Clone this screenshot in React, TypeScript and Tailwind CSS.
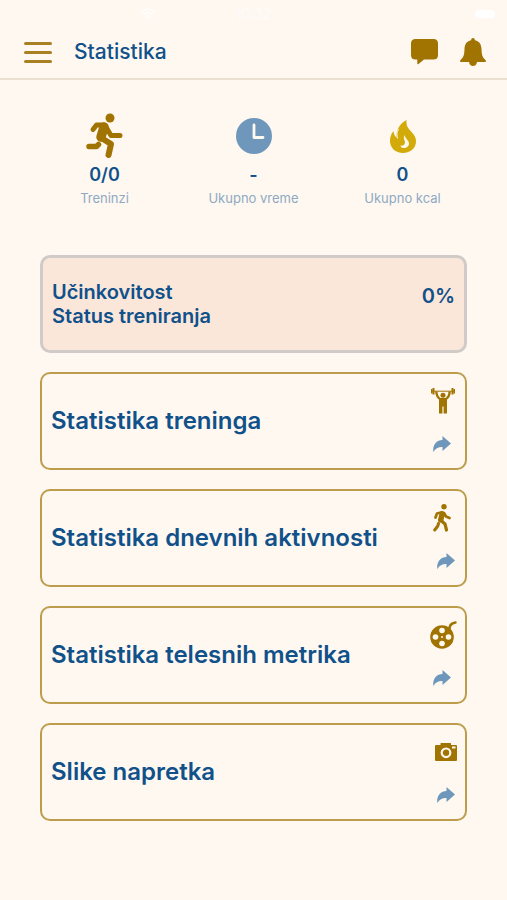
import React from 'react';
import { Wifi } from 'lucide-react';

type IconProps = { className?: string };

const RunnerIcon = ({ className }: IconProps) => (
    <svg viewBox="0 0 38 46" className={className} fill="none" stroke="currentColor" strokeLinecap="round" strokeLinejoin="round" aria-hidden="true">
        <circle cx="24" cy="5" r="4.5" fill="currentColor" stroke="none" />
        <path d="M7 16.500L10.500 12L18 12" strokeWidth="5" />
        <path d="M20 14L25 22.500L34 22.500" strokeWidth="5" />
        <path d="M18 14L15 24" strokeWidth="9.500" />
        <path d="M15.500 25L25 31L22.500 42" strokeWidth="6" />
        <path d="M3 33.500L10.500 33.500L12.500 31.500" strokeWidth="5.500" />
    </svg>
);

const ClockIcon = ({ className }: IconProps) => (
    <svg viewBox="0 0 36 36" className={className} aria-hidden="true">
        <circle cx="18" cy="18" r="18" fill="currentColor" />
        <path d="M18 7V19.500H27" fill="none" stroke="#fef8f1" strokeWidth="2.800" strokeLinecap="round" strokeLinejoin="round" />
    </svg>
);

const FlameIcon = ({ className }: IconProps) => (
    <svg viewBox="0 0 26 33" className={className} aria-hidden="true">
        <path d="M16.500 0C16 6 18 8 21.500 12C24.500 15.400 26 17.500 26 21.500C26 28 20.500 33 13 33C5.500 33 0 28 0 21C0 17 1 14 3.500 11C3.800 14 4.500 16 6.500 17.500C6 10 9.500 4 16.500 0Z" fill="currentColor" />
        <path d="M15 15C14.500 18.500 19 20 19 23.500C19 26 17 28 13.500 28C11.500 28 10.500 26.500 10.500 25.500C13 26 15 25 15 22.500C15 20 12.500 18 15 15Z" fill="#fef8f1" />
        <path d="M8.500 9C6.500 12 6.800 15.500 7.500 18.500" fill="none" stroke="#fef8f1" strokeWidth="1" />
    </svg>
);

const ChatIcon = ({ className }: IconProps) => (
    <svg viewBox="0 0 27 26" className={className} fill="currentColor" aria-hidden="true">
        <path d="M4.500 0H22.500Q27 0 27 4.500V16Q27 20.500 22.500 20.500H13L7.500 25Q6.300 25.600 6.300 24.200V20.500H4.500Q0 20.500 0 16V4.500Q0 0 4.500 0Z" />
    </svg>
);

const BellIcon = ({ className }: IconProps) => (
    <svg viewBox="0 0 26 29" className={className} fill="currentColor" aria-hidden="true">
        <path d="M13 0Q14.800 0 15 2.200C19.500 3.200 21.300 6.500 21.500 11C21.700 17 22.500 19.500 25.500 22Q26.700 24 24.500 24H1.500Q-.7 24 .5 22C3.500 19.500 4.300 17 4.500 11C4.700 6.500 6.500 3.200 11 2.200Q11.200 0 13 0Z" />
        <path d="M9 24H17Q16.300 28 13 28Q9.700 28 9 24Z" />
    </svg>
);

const LifterIcon = ({ className }: IconProps) => (
    <svg viewBox="0 0 24 26" className={className} fill="currentColor" aria-hidden="true">
        <path d="M1 3.200H23" stroke="currentColor" strokeWidth="1" />
        <rect x="0" y="1" width="1.500" height="4.500" />
        <rect x="1.500" y="0" width="2" height="6.500" />
        <rect x="22.500" y="1" width="1.500" height="4.500" />
        <rect x="20.500" y="0" width="2" height="6.500" />
        <circle cx="12" cy="7.200" r="2.500" />
        <path d="M5.300 3.500C5.500 7.500 7 10 9.500 11.300H14.500C17 10 18.500 7.500 18.700 3.500" fill="none" stroke="currentColor" strokeWidth="2.400" />
        <path d="M8 10H16V25.500H12.600V18.500H11.400V25.500H8Z" />
    </svg>
);

const WalkerIcon = ({ className }: IconProps) => (
    <svg viewBox="0 0 18 28" className={className} fill="none" stroke="currentColor" strokeLinecap="round" strokeLinejoin="round" aria-hidden="true">
        <circle cx="11" cy="2.700" r="2.700" fill="currentColor" stroke="none" />
        <path d="M2.500 13.500L4 9.500L8 8.500L11 9L13 12.500L16.500 14" strokeWidth="2.700" />
        <path d="M9.200 9.800L7.700 16" strokeWidth="5.400" />
        <path d="M8 16.500L12 20L13.500 26" strokeWidth="3.200" />
        <path d="M5.500 19.500L4.800 22L1.700 26" strokeWidth="3" />
    </svg>
);

const ReelIcon = ({ className }: IconProps) => (
    <svg viewBox="0 0 27 28" className={className} aria-hidden="true">
        <circle cx="12" cy="16" r="11.800" fill="currentColor" />
        <path d="M19.500 9.500C19 4.500 21.500 2 25.500 1.500" fill="none" stroke="currentColor" strokeWidth="2.500" strokeLinecap="round" />
        <g fill="#fef8f1">
            <circle cx="12" cy="9.500" r="2.800" />
            <circle cx="12" cy="22.500" r="2.800" />
            <circle cx="5.500" cy="16" r="2.800" />
            <circle cx="18.500" cy="16" r="2.800" />
            <circle cx="12" cy="16" r="1" />
        </g>
    </svg>
);

const CameraIcon = ({ className }: IconProps) => (
    <svg viewBox="0 0 22 18" className={className} aria-hidden="true">
        <path d="M1 2H5.500V0.500Q5.500 0 6 0H15.500Q16 0 16 .5V2H21Q22 2 22 3V17Q22 18 21 18H1Q0 18 0 17V3Q0 2 1 2Z" fill="currentColor" />
        <circle cx="11" cy="9.800" r="4.300" fill="none" stroke="#fef8f1" strokeWidth="2.200" />
        <rect x="17" y="3.500" width="3.500" height="2" fill="#fef8f1" />
    </svg>
);

const ShareArrowIcon = ({ className }: IconProps) => (
    <svg viewBox="0 0 18 16" className={className} fill="currentColor" aria-hidden="true">
        <path d="M9.500 0L18 7.500L9.500 15V11C5.500 10.800 2.500 12.500 .3 16C-.5 9.500 3 4.200 9.500 4Z" />
    </svg>
);

const stats = [
    { label: 'Treninzi', value: '0/0', icon: <RunnerIcon className="h-[46px] w-[38px] text-[#a17300]" /> },
    { label: 'Ukupno vreme', value: '-', icon: <ClockIcon className="size-9 text-[#6f97bb]" /> },
    { label: 'Ukupno kcal', value: '0', icon: <FlameIcon className="h-[33px] w-[26px] text-[#d2ab0b]" /> },
];

const sections = [
    { title: 'Statistika treninga', icon: <LifterIcon className="h-[26px] w-6" />, arrow: 'mr-1' },
    { title: 'Statistika dnevnih aktivnosti', icon: <WalkerIcon className="mr-1 h-7 w-[18px]" />, arrow: '' },
    { title: 'Statistika telesnih metrika', icon: <ReelIcon className="-mr-0.5 h-7 w-[27px]" />, arrow: 'mr-1' },
    { title: 'Slike napretka', icon: <CameraIcon className="-mr-0.5 h-[18px] w-[22px]" />, arrow: '' },
];

const App: React.FC = () => {
    return (
        <div className="min-h-screen bg-[#fef8f1] font-['Inter','Liberation_Sans',sans-serif] text-[#11518a]">
            {/* Status bar */}
            <div className="flex h-7 items-center justify-between px-3 text-sm text-white/60">
                <span className="flex w-36 justify-end">
                    <Wifi size={16} strokeWidth={3} />
                </span>
                <span>10:32</span>
                <span className="flex w-36 justify-end">
                    <span className="h-2 w-5 rounded-sm bg-white" />
                </span>
            </div>

            {/* Header */}
            <header className="flex h-[52px] items-center border-b-2 border-[#ece1d0] pr-[21px] pb-0.5 pl-5">
                <button type="button" aria-label="Meni" className="flex w-9 flex-col gap-[6px] px-1">
                    <span className="h-[3px] w-full rounded-sm bg-[#a98022]" />
                    <span className="h-[3px] w-full rounded-sm bg-[#a98022]" />
                    <span className="h-[3px] w-full rounded-sm bg-[#a98022]" />
                </button>
                <h1 className="ml-[18px] flex-1 text-[21px] font-medium">Statistika</h1>
                <div className="flex items-center gap-[22px] text-[#a17300]">
                    <button type="button" aria-label="Poruke">
                        <ChatIcon className="h-[26px] w-[27px]" />
                    </button>
                    <button type="button" aria-label="Obaveštenja">
                        <BellIcon className="h-[29px] w-[26px]" />
                    </button>
                </div>
            </header>

            <main className="px-10 pb-10">
                {/* Totals */}
                <section className="-mx-2.5 grid grid-cols-3 pt-8">
                    {stats.map((stat) => (
                        <div key={stat.label} className="flex flex-col items-center">
                            <div className="flex h-12 items-center">{stat.icon}</div>
                            <p className="pt-px text-lg leading-7 font-semibold">{stat.value}</p>
                            <p className="text-[13px] leading-[18px] text-[#8fa9c2]">{stat.label}</p>
                        </div>
                    ))}
                </section>

                <div className="mt-12 flex flex-col gap-[19px]">
                    <section className="flex h-[98px] items-center justify-between rounded-[10px] border-[3px] border-[#d0cbc8] bg-[#fbe7da] px-[9px] text-xl leading-6 font-semibold">
                        <div>
                            <h2>Učinkovitost</h2>
                            <p>Status treniranja</p>
                        </div>
                        <p className="pb-4">0%</p>
                    </section>

                    {sections.map((section) => (
                        <button
                            key={section.title}
                            type="button"
                            className="flex h-[98px] items-center justify-between rounded-[10px] border-2 border-[#bd9d4b] px-[9px] text-left text-2xl font-semibold"
                        >
                            {section.title}
                            <span className="flex h-full flex-col items-end justify-between pt-[11px] pr-px pb-4">
                                <span className="flex h-8 items-center text-[#a17300]">{section.icon}</span>
                                <ShareArrowIcon className={`h-4 w-[18px] text-[#6f97bb] ${section.arrow}`} />
                            </span>
                        </button>
                    ))}
                </div>
            </main>
        </div>
    );
};

export default App;
